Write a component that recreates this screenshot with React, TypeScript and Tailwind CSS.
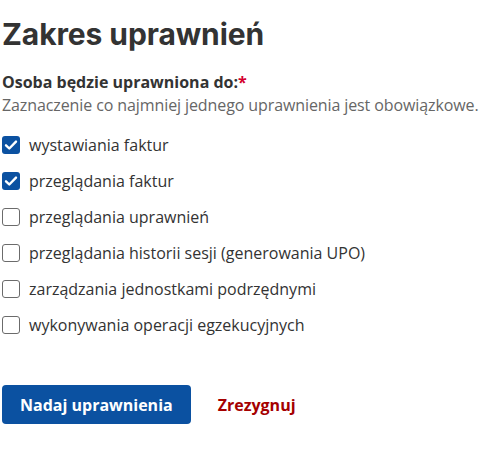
import React, { useState } from 'react';

const options = [
  'wystawiania faktur',
  'przeglądania faktur',
  'przeglądania uprawnień',
  'przeglądania historii sesji (generowania UPO)',
  'zarządzania jednostkami podrzędnymi',
  'wykonywania operacji egzekucyjnych',
];

export default function App() {
  const [checked, setChecked] = useState<boolean[]>([true, true, false, false, false, false]);

  const toggle = (i: number) =>
    setChecked((prev) => prev.map((v, idx) => (idx === i ? !v : v)));

  return (
    <div className="bg-white w-[483px] h-[470px] overflow-hidden pl-[2px] pt-[16px] text-[#333] font-['Open_Sans',sans-serif]">
      <h2 className="font-['Inter',sans-serif] font-bold text-[30px] leading-[36px] text-[#333] tracking-[-0.1px]">
        Zakres uprawnień
      </h2>

      <fieldset className="mt-[19px]">
        <legend className="text-[16px] leading-[22px] font-bold">
          Osoba będzie uprawniona do:<span className="text-[#d4002d]">*</span>
        </legend>
        <p className="text-[16px] leading-[24px] text-[#666] whitespace-nowrap tracking-[-0.1px]">
          Zaznaczenie co najmniej jednego uprawnienia jest obowiązkowe.
        </p>

        <div className="mt-[17px] flex flex-col gap-[14px]">
          {options.map((label, i) => (
            <label key={label} className="flex items-center gap-[9px] cursor-pointer h-[22px]">
              <input
                type="checkbox"
                className="sr-only"
                checked={checked[i]}
                onChange={() => toggle(i)}
              />
              <span
                className={`w-[18px] h-[18px] rounded-[3px] flex items-center justify-center ${
                  checked[i] ? 'bg-[#0b51a1]' : 'border border-[#6b6b6b] bg-white'
                }`}
              >
                {checked[i] && (
                  <svg viewBox="0 0 18 18" className="w-[18px] h-[18px]" fill="none">
                    <path d="M4 9.3l3.3 3.2L14 5.6" stroke="white" strokeWidth="2.4" strokeLinecap="round" strokeLinejoin="round" />
                  </svg>
                )}
              </span>
              <span className="text-[16px] leading-[22px]">{label}</span>
            </label>
          ))}
        </div>
      </fieldset>

      <div className="mt-[49px] flex items-center gap-[27px]">
        <button className="bg-[#0b51a1] text-white font-bold text-[16px] h-[39px] px-[18px] rounded-[4px]">
          Nadaj uprawnienia
        </button>
        <button className="text-[#a50000] font-bold text-[16px]">Zrezygnuj</button>
      </div>
    </div>
  );
}
